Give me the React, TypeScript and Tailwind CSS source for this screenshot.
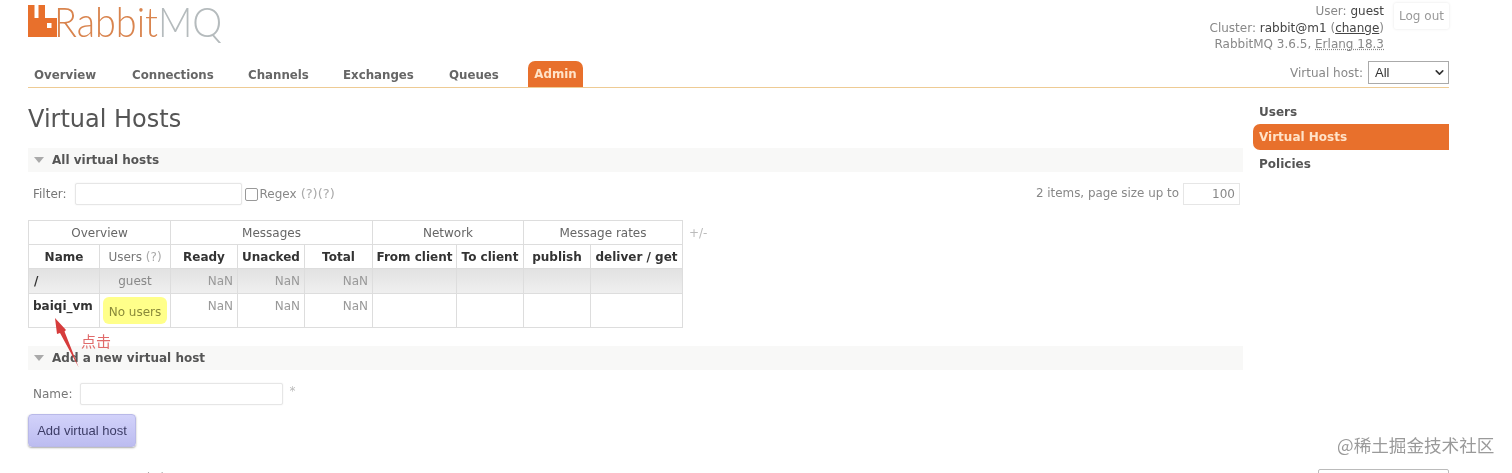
import { ChevronDown } from "lucide-react";

const tabs = [
  { label: "Overview", className: "w-[98px] pl-[6px]" },
  { label: "Connections", className: "w-[116px] pl-[6px]" },
  { label: "Channels", className: "w-[95px] pl-[6px]" },
  { label: "Exchanges", className: "w-[106px] pl-[6px]" },
  { label: "Queues", className: "w-[85px] pl-[6px]" },
];

const groupHeaders = [
  { label: "Overview", span: 2 },
  { label: "Messages", span: 3 },
  { label: "Network", span: 2 },
  { label: "Message rates", span: 2 },
];

const columnHeaders = ["Ready", "Unacked", "Total", "From client", "To client", "publish", "deliver / get"];
const columnWidths = ["w-[71px]", "w-[71px]", "w-[67px]", "w-[67px]", "w-[68px]", "w-[84px]", "w-[67px]", "w-[67px]", "w-[92px]"];

function Logo() {
  return (
    <div className="flex h-[44px] items-start pt-[4px]">
      <svg width="29" height="33" viewBox="0 0 29 33" className="shrink-0">
        <path d="M0 1h6.5v13h4V1H17v13h12v19H0z" fill="#e8702c" />
        <rect x="19" y="19" width="4.5" height="5" fill="#fff" />
      </svg>
      <span className="ml-[-3px] inline-block origin-left scale-x-[0.9] font-['Lato',sans-serif] text-[42px] leading-[34px] font-light">
        <span className="text-[#d9844e]">Rabbit</span>
        <span className="text-[#b5bbbd]">MQ</span>
      </span>
    </div>
  );
}

function SectionHeader({ title, children }: { title: string; children?: React.ReactNode }) {
  return (
    <div className="flex h-[24px] items-center bg-[#f8f8f7] pl-[6px] text-[12px] font-bold text-[#555]">
      <span className="mr-[8px] h-0 w-0 border-x-[5px] border-t-[6px] border-x-transparent border-t-[#aaa]" />
      {title}
      {children}
    </div>
  );
}

function Field({ className }: { className: string }) {
  return <div className={`h-[22px] rounded-[2px] border border-[#e6e6e6] bg-white shadow-[0_0_2px_#eee] ${className}`} />;
}

function HostTable() {
  return (
    <table className="table-fixed border-collapse text-[12px] text-[#666]">
      <colgroup>
        {columnWidths.map((w, i) => (
          <col key={i} className={w} />
        ))}
      </colgroup>
      <thead>
        <tr className="h-[24px]">
          {groupHeaders.map((g) => (
            <th key={g.label} colSpan={g.span} className="border border-[#ddd] p-0 font-normal text-[#666]">
              {g.label}
            </th>
          ))}
        </tr>
        <tr className="h-[24px]">
          <th className="border border-[#ddd] p-0 font-bold text-[#333]">Name</th>
          <th className="border border-[#ddd] p-0 font-normal text-[#777]">
            Users <span className="text-[#aaa]">(?)</span>
          </th>
          {columnHeaders.map((h) => (
            <th key={h} className="border border-[#ddd] p-0 font-bold whitespace-nowrap text-[#333]">
              {h}
            </th>
          ))}
        </tr>
      </thead>
      <tbody>
        <tr className="h-[25px] bg-gradient-to-b from-[#e2e2e2] to-[#f0f0f0]">
          <td className="border border-[#ddd] px-[5px] font-bold text-[#333]">/</td>
          <td className="border border-[#ddd] text-center text-[#888]">guest</td>
          {["NaN", "NaN", "NaN"].map((v, i) => (
            <td key={i} className="border border-[#ddd] pr-[4px] text-right text-[#999]">
              {v}
            </td>
          ))}
          {[0, 1, 2, 3].map((i) => (
            <td key={i} className="border border-[#ddd]" />
          ))}
        </tr>
        <tr className="h-[33px]">
          <td className="border border-[#ddd] px-[4px] pb-[10px] font-bold whitespace-nowrap text-[#333]">baiqi_vm</td>
          <td className="border border-[#ddd] p-[3px]">
            <div className="flex h-[27px] items-center justify-center rounded-[6px] bg-[#ffff8a] pt-[2px] text-[#8a8a3a]">
              No users
            </div>
          </td>
          {["NaN", "NaN", "NaN"].map((v, i) => (
            <td key={i} className="border border-[#ddd] pr-[4px] pb-[10px] text-right text-[#999]">
              {v}
            </td>
          ))}
          {[0, 1, 2, 3].map((i) => (
            <td key={i} className="border border-[#ddd]" />
          ))}
        </tr>
      </tbody>
    </table>
  );
}

export default function App() {
  return (
    <div className="relative h-[473px] w-[1512px] overflow-hidden bg-white font-['DejaVu_Sans',sans-serif] text-[#777] blur-[0.4px]">
      <div className="ml-[28px] w-[1421px]">
        {/* Header */}
        <div className="relative h-[88px] border-b border-[#eecb94]">
          <Logo />
          <div className="absolute top-[3px] right-[65px] text-right text-[12px] leading-[16.5px] text-[#888]">
            <div>
              User: <span className="text-[#444]">guest</span>
            </div>
            <div>
              Cluster: <span className="text-[#444]">rabbit@m1</span> (<u className="text-[#444]">change</u>)
            </div>
            <div>
              RabbitMQ 3.6.5, <u className="decoration-dotted">Erlang 18.3</u>
            </div>
          </div>
          <div className="absolute top-[3px] right-0 flex h-[26px] w-[55px] items-center justify-center rounded-[2px] text-[12px] text-[#999] shadow-[0_0_3px_#e5e5e5]">
            Log out
          </div>

          <div className="absolute bottom-0 left-0 flex h-[27px] items-end">
            {tabs.map((t) => (
              <div key={t.label} className={`h-[26px] pt-[6px] text-[11.8px] font-bold text-[#666] ${t.className}`}>
                {t.label}
              </div>
            ))}
            <div className="flex h-[26px] w-[55px] items-center justify-center rounded-t-[7px] bg-[#e8702c] pt-[2px] text-[11.8px] font-bold text-[#ffe3c8]">
              Admin
            </div>
          </div>

          <div className="absolute right-0 bottom-[3px] flex items-center gap-[5px] text-[12px] text-[#888]">
            Virtual host:
            <div className="flex h-[23px] w-[81px] items-center justify-between border border-[#aaa] pr-[2px] pl-[6px] font-['Liberation_Sans',sans-serif] text-[13px] text-[#333]">
              All
              <ChevronDown size={13} strokeWidth={3} className="text-[#333]" />
            </div>
          </div>
        </div>

        <div className="flex gap-[10px]">
          {/* Main column */}
          <div className="w-[1215px]">
            <h1 className="mt-[17px] mb-[15px] text-[24px] leading-[28px] font-normal text-[#555]">Virtual Hosts</h1>
            <SectionHeader title="All virtual hosts" />

            <div className="mt-[10px] flex h-[24px] items-center text-[12px] text-[#777]">
              <span className="ml-[5px]">Filter:</span>
              <Field className="ml-[8px] w-[167px]" />
              <span className="ml-[3px] h-[13px] w-[13px] rounded-[2px] border border-[#999]" />
              <span className="ml-[2px] text-[#888]">Regex</span>
              <span className="ml-[4px] text-[13px] text-[#aaa]">(?)(?)</span>
              <span className="ml-auto text-[11.9px] text-[#888]">2 items, page size up to</span>
              <div className="mr-[3px] ml-[4px] h-[22px] w-[57px] border border-[#e6e6e6] pr-[4px] text-right leading-[20px] text-[#888]">
                100
              </div>
            </div>

            <div className="mt-[14px] flex items-start">
              <HostTable />
              <span className="mt-[4px] ml-[6px] text-[12px] text-[#bbb]">+/-</span>
            </div>

            <div className="mt-[18px]">
              <SectionHeader title="Add a new virtual host" />
            </div>

            <div className="mt-[12px] flex h-[23px] items-center text-[12px]">
              <span className="ml-[5px] text-[#777]">Name:</span>
              <Field className="ml-[8px] w-[203px]" />
              <span className="mb-[6px] ml-[6px] text-[#bbb]">*</span>
            </div>

            <button className="mt-[9px] h-[33px] w-[108px] rounded-[4px] border border-[#b9b9e8] bg-gradient-to-b from-[#d2d2fa] to-[#bcbcf0] font-['Liberation_Sans',sans-serif] text-[13px] text-[#3c3c66] shadow-[0_1px_2px_#aaa]">
              Add virtual host
            </button>

            <div className="mt-[22px] ml-[3px] text-[12px] text-[#aaa]">HTTP API Command Line</div>
          </div>

          {/* Sidebar */}
          <div className="w-[196px] pt-[15px] text-[12px] font-bold">
            <div className="h-[21px] pl-[6px] text-[#555]">Users</div>
            <div className="flex h-[26px] items-center rounded-l-[7px] bg-[#e8702c] pl-[6px] text-[#ffe3c8]">
              Virtual Hosts
            </div>
            <div className="mt-[5px] pl-[6px] text-[#555]">Policies</div>
          </div>
        </div>
      </div>

      {/* Overlays: annotation, watermark, cut-off footer select */}
      <svg width="60" height="70" viewBox="0 0 60 70" className="absolute top-[310px] left-[40px]">
        <path d="M15 8 L26 20 L24.5 21.5 L38.5 57 L20 23 L17 24 Z" fill="#d63c3c" />
      </svg>
      <span className="absolute top-[331px] left-[81px] font-['Noto_Sans_CJK_SC',sans-serif] text-[15px] leading-[20px] text-[#e06a6a]">
        点击
      </span>
      <span className="absolute top-[434px] left-[1337px] font-['Noto_Sans_CJK_SC',sans-serif] text-[17.6px] leading-[22px] whitespace-nowrap text-[#9a9a9a]">
        @稀土掘金技术社区
      </span>
      <div className="absolute top-[469px] left-[1318px] h-[20px] w-[131px] rounded-[2px] border border-[#bbb]" />
    </div>
  );
}
